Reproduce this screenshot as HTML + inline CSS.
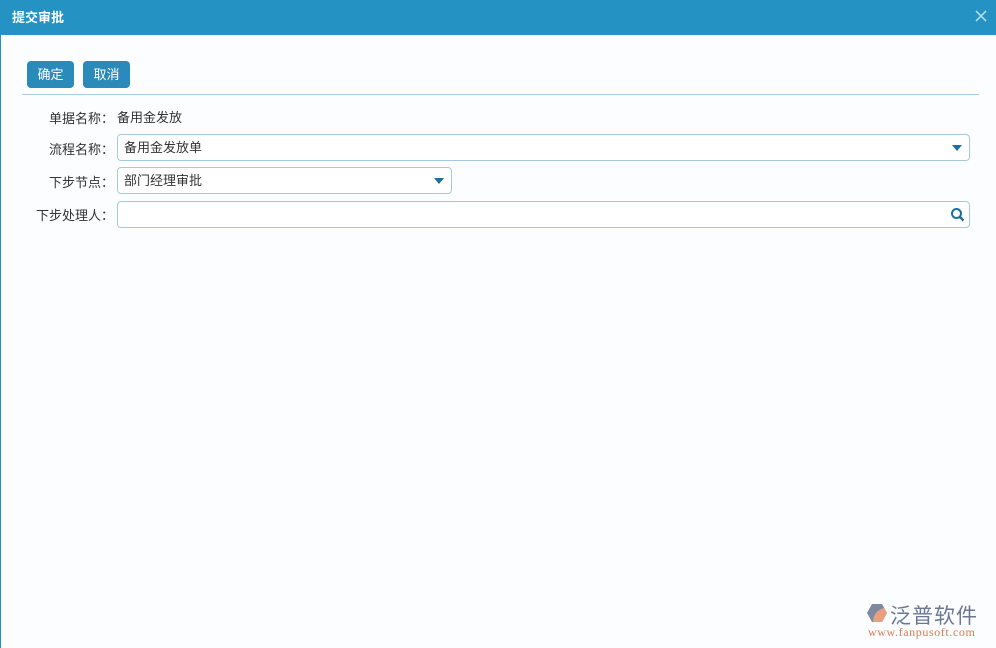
<!DOCTYPE html>
<html><head><meta charset="utf-8"><style>
body{margin:0;width:996px;height:648px;background:#fbfdfe;font-family:"Liberation Sans","Noto Sans CJK SC",sans-serif;font-size:13px;color:#333;position:relative;overflow:hidden}
.hd{position:absolute;left:0;top:0;width:996px;height:35px;background:#2492c3;color:#fff;font-weight:bold;font-size:13px;line-height:35px}
.hd span{margin-left:12px}
.lb{position:absolute;left:0;top:35px;width:1px;height:613px;background:#2492c3}
.x{position:absolute;right:8px;top:9px;width:14px;height:14px}
.btn{position:absolute;top:61px;height:27px;width:47px;background:#2a8bbb;color:#fff;border-radius:4px;text-align:center;line-height:27px;font-size:13px}
.line{position:absolute;left:22px;top:94px;width:957px;height:1px;background:#a9cde4}
.l{position:absolute;width:92px;text-align:right;left:22px}
.in{position:absolute;left:117px;height:25px;border:1px solid #a7c9e0;border-radius:4px;background:#fff;line-height:25px;padding-left:6px;box-sizing:content-box}
.tri{position:absolute;right:7px;top:10px;width:0;height:0;border-left:5px solid transparent;border-right:5px solid transparent;border-top:6px solid #1d6ea0}
</style></head><body>
<div class="hd"><span>提交审批</span></div>
<svg class="x" viewBox="0 0 14 14"><path d="M2 2L12 12M12 2L2 12" stroke="#bfe0ef" stroke-width="1.5"/></svg>
<div class="lb"></div>
<div class="btn" style="left:27px">确定</div>
<div class="btn" style="left:83px">取消</div>
<div class="line"></div>
<div class="l" style="top:108px">单据名称：</div>
<div style="position:absolute;left:117px;top:107px">备用金发放</div>
<div class="l" style="top:139px">流程名称：</div>
<div class="in" style="top:134px;width:845px">备用金发放单<div class="tri"></div></div>
<div class="l" style="top:172px">下步节点：</div>
<div class="in" style="top:167px;width:327px">部门经理审批<div class="tri"></div></div>
<div class="l" style="top:205px">下步处理人：</div>
<div class="in" style="top:201px;width:845px"><svg style="position:absolute;right:4px;top:5px" width="15" height="15" viewBox="0 0 15 15"><circle cx="6.5" cy="6.5" r="4.5" fill="none" stroke="#1d6ea0" stroke-width="2"/><path d="M10 10L13.5 13.5" stroke="#1d6ea0" stroke-width="2.4"/></svg></div>
<svg style="position:absolute;left:866px;top:603px" width="22" height="20" viewBox="0 0 22 20"><path d="M6 1H16L21 10L16 19H6L1 10Z" fill="#7d8aa0"/><path d="M7 19C7 12 11 7 18 5L21 10L16 19Z" fill="#e8a080"/></svg>
<div style="position:absolute;left:890px;top:600px;font-size:21px;color:#6c7891;letter-spacing:1px">泛普软件</div>
<div style="position:absolute;left:868px;top:625px;font-size:12px;color:#e07a50;font-family:'Liberation Serif',serif;letter-spacing:0.6px">www.fanpusoft.com</div>
</body></html>
